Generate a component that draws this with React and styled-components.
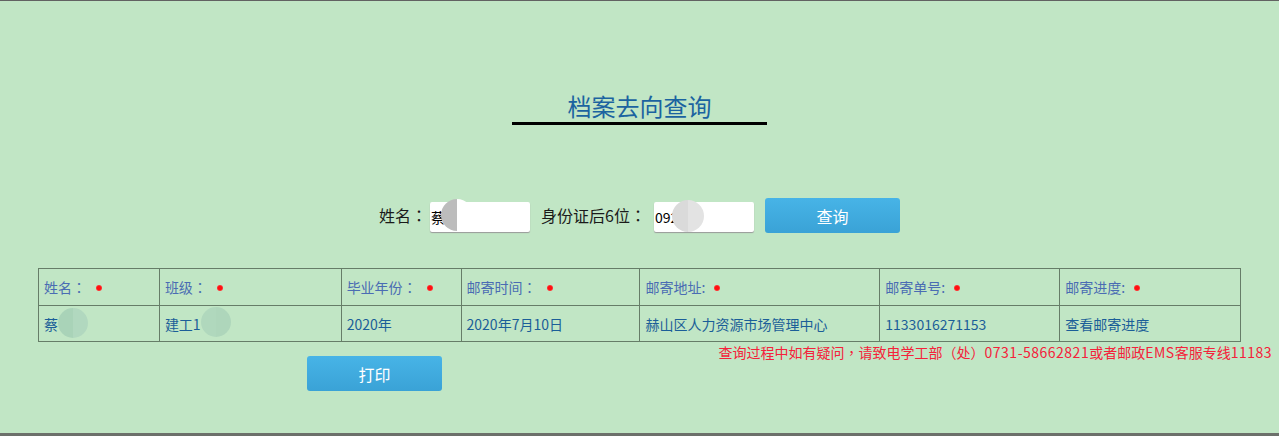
import styled, { createGlobalStyle } from "styled-components";

const GlobalStyle = createGlobalStyle`
  html, body {
    margin: 0;
    padding: 0;
    background: #c1e6c5;
  }
  * {
    box-sizing: border-box;
  }
`;

const Page = styled.div`
  height: 436px;
  background: #c1e6c5;
  border-top: 1px solid #626262;
  border-bottom: 3px solid #6c706b;
  font-family: "Noto Sans CJK SC", "Noto Sans", sans-serif;
  display: flex;
  flex-direction: column;
  align-items: center;
`;

// full-width punctuation centred in its cell, as the reference font draws it
const P = styled.span`
  font-family: "Noto Sans CJK TC", sans-serif;
`;

const Latin = styled.span`
  letter-spacing: 0.5px;
`;

const TitleBlock = styled.div`
  margin-top: 88px;
  width: 255px;
  display: flex;
  flex-direction: column;
  align-items: center;
  border-bottom: 3px solid #000;
`;

const Title = styled.h1`
  margin: 0;
  font-size: 24px;
  font-weight: normal;
  line-height: 33px;
  color: #1b63a0;
`;

const SearchRow = styled.div`
  margin-top: 73px;
  display: flex;
  align-items: flex-start;
`;

const Label = styled.span`
  font-size: 16px;
  line-height: 22px;
  color: #1a1a1a;
  margin: 6px ${(p) => p.$mr || 3}px 0 ${(p) => p.$gap || 0}px;
`;

const InputWrap = styled.div`
  position: relative;
  width: 100px;
  height: 30px;
  margin-top: 4px;
`;

const Input = styled.div`
  width: 100%;
  height: 100%;
  background: #fff;
  border-radius: 2px;
  box-shadow: 0 1px 1px #9a9a9a;
  font-size: 14px;
  line-height: 30px;
  color: #000;
  padding-left: 1px;
`;

const Blur = styled.span`
  position: absolute;
  top: ${(p) => p.$top}px;
  left: ${(p) => p.$left}px;
  width: ${(p) => p.$size}px;
  height: ${(p) => p.$size}px;
  border-radius: 50%;
  background: linear-gradient(90deg, ${(p) => p.$a} 0 50%, ${(p) => p.$b} 50%);
`;

const Button = styled.button`
  width: 135px;
  height: 35px;
  border: none;
  border-radius: 3px;
  background: linear-gradient(#47b4e7, #3aa2d6);
  color: #fff;
  font-family: "Noto Sans CJK SC", sans-serif;
  font-size: 16px;
  margin-left: ${(p) => p.$ml || 0}px;
  margin-top: ${(p) => p.$mt || 0}px;
  cursor: pointer;
`;

const Table = styled.table`
  margin-top: 35px;
  width: 1203px;
  border-collapse: collapse;
  font-size: 14px;
`;

const Th = styled.td`
  height: 37px;
  border: 1px solid #667d68;
  padding: 0 0 0 5px;
  color: #4a6cb3;
  white-space: nowrap;
  width: ${(p) => p.$w}px;
`;

const Td = styled.td`
  position: relative;
  height: 36px;
  border: 1px solid #667d68;
  padding: 0 0 0 5px;
  color: #1b5e98;
  white-space: nowrap;
`;

const Dot = styled.span`
  display: inline-block;
  width: 6px;
  height: 6px;
  border-radius: 50%;
  background: radial-gradient(#ff1010 40%, #ff6a6a);
  margin-left: ${(p) => p.$ml || 10}px;
  vertical-align: middle;
  position: relative;
  top: -1px;
`;

const Footer = styled.div`
  width: 100%;
  display: flex;
  justify-content: space-between;
  align-items: flex-start;
  padding: 0 7px 0 307px;
`;

const Note = styled.div`
  font-size: 14px;
  color: #f5213a;
  line-height: 20px;
`;

const headers = [
  { t: "姓名", c: "：", w: 121 },
  { t: "班级", c: "：", w: 182 },
  { t: "毕业年份", c: "：", w: 120 },
  { t: "邮寄时间", c: "：", w: 179 },
  { t: "邮寄地址:", w: 240, dot: 9 },
  { t: "邮寄单号:", w: 180, dot: 9 },
  { t: "邮寄进度:", w: 181, dot: 9 },
];

const row = ["蔡", "建工1", "2020年", "2020年7月10日", "赫山区人力资源市场管理中心", "1133016271153", "查看邮寄进度"];

export default function App() {
  return (
    <>
      <GlobalStyle />
      <Page>
        <TitleBlock>
          <Title>档案去向查询</Title>
        </TitleBlock>
        <SearchRow>
          <Label>
            姓名<P>：</P>
          </Label>
          <InputWrap>
            <Input>蔡</Input>
            <Blur $top={-3} $left={11} $size={32} $a="#bcbcbc" $b="#ffffff" />
          </InputWrap>
          <Label $gap={11} $mr={8}>
            身份证后6位<P>：</P>
          </Label>
          <InputWrap>
            <Input>092</Input>
            <Blur $top={-2} $left={18} $size={32} $a="#dadada" $b="#e3e3e3" />
          </InputWrap>
          <Button $ml={11}>查询</Button>
        </SearchRow>
        <Table>
          <tbody>
            <tr>
              {headers.map((h) => (
                <Th key={h.t} $w={h.w}>
                  {h.t}
                  {h.c && <P>{h.c}</P>}
                  <Dot $ml={h.dot} />
                </Th>
              ))}
            </tr>
            <tr>
              {row.map((c, i) => (
                <Td key={i}>
                  {c}
                  {i === 0 && <Blur $top={2} $left={19} $size={30} $a="#a9d3b8" $b="#b1d8bf" />}
                  {i === 1 && <Blur $top={1} $left={41} $size={30} $a="#b0d8bd" $b="#aed6bb" />}
                </Td>
              ))}
            </tr>
          </tbody>
        </Table>
        <Footer>
          <Button $mt={14}>打印</Button>
          <Note>
            查询过程中如有疑问<P>，</P>请致电学工部<P>（</P>处<P>）</P>
            <Latin>0731-58662821</Latin>或者邮政<Latin>EMS</Latin>客服专线<Latin>11183</Latin>
          </Note>
        </Footer>
      </Page>
    </>
  );
}
